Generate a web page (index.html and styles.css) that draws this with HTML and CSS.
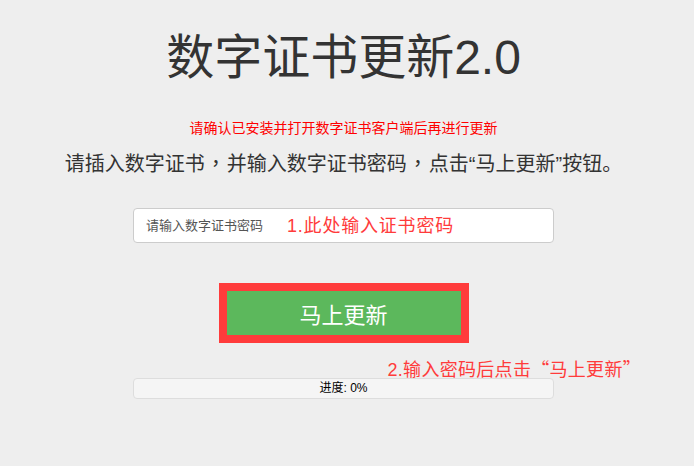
FILE: index.html
```html
<!DOCTYPE html>
<html>
<head>
    <meta charset="utf-8">
    <link rel="stylesheet" href="styles.css">
</head>
<body>
    <div class="page">
        <h1 class="title">数字证书更新2.0</h1>
        <p class="notice">请确认已安装并打开数字证书客户端后再进行更新</p>
        <p class="intro">请插入数字证书<span class="comma">，</span>并输入数字证书密码<span class="comma">，</span>点击“马上更新”按钮。</p>
        <div class="field">
            <input type="password" class="pwd" placeholder="请输入数字证书密码">
            <span class="tip tip-input">1.此处输入证书密码</span>
        </div>
        <div class="action">
            <button class="update-btn">马上更新</button>
            <span class="tip tip-button">2.输入密码后点击<span class="wide-quote">“马上更新”</span></span>
        </div>
        <div class="progress">进度: 0%</div>
    </div>
</body>
</html>
```

FILE: styles.css
```css
body {
    margin: 0;
    background-color: #eeeeee;
    font-family: "Liberation Sans", "Noto Sans CJK SC", sans-serif;
    color: #333;
}
.page {
    width: 687px;
    padding-top: 28px;
    display: flex;
    flex-direction: column;
    align-items: center;
    text-align: center;
}
.title {
    margin: 0;
    font-size: 48px;
    line-height: 60px;
    font-weight: normal;
    color: #333;
}
.notice {
    margin: 30px 0 0;
    font-size: 14px;
    line-height: 20px;
    color: #ff0000;
}
.intro {
    margin: 11px 0 0;
    font-size: 20px;
    line-height: 28px;
    color: #333;
}
.comma {
    display: inline-block;
    width: 22px;
    text-align: center;
    font-family: "Noto Sans CJK TC", sans-serif;
}
.field {
    position: relative;
    margin-top: 30px;
    width: 421px;
}
.pwd {
    display: block;
    width: 100%;
    height: 35px;
    box-sizing: border-box;
    padding: 0 12px;
    border: 1px solid #ccc;
    border-radius: 4px;
    background-color: #fff;
    font-family: inherit;
    font-size: 13px;
    color: #555;
}
.pwd::placeholder {
    color: #555;
}
.tip {
    position: absolute;
    font-size: 18px;
    line-height: 22px;
    color: #ff3b3b;
    white-space: nowrap;
    text-align: left;
}
.tip-input {
    left: 154px;
    top: 7px;
    letter-spacing: 0.8px;
}
.wide-quote {
    font-family: "Noto Sans CJK SC", sans-serif;
}
.action {
    position: relative;
    margin-top: 40px;
}
.update-btn {
    display: block;
    width: 250px;
    height: 60px;
    box-sizing: border-box;
    border: 8px solid #ff3b3b;
    background-color: #5cb85c;
    color: #fff;
    font-family: inherit;
    font-size: 22px;
    padding-bottom: 2px;
    cursor: pointer;
}
.tip-button {
    left: 169px;
    top: 74px;
    letter-spacing: 0.3px;
}
.progress {
    margin-top: 35px;
    width: 421px;
    height: 21px;
    box-sizing: border-box;
    border: 1px solid #ddd;
    border-radius: 4px;
    background-color: #f5f5f5;
    font-size: 12px;
    line-height: 19px;
    color: #000;
}
```
